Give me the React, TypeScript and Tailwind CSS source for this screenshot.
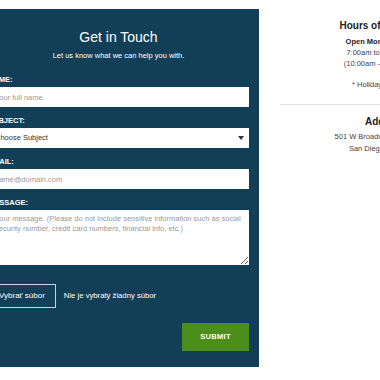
import React from 'react';

const font = { fontFamily: '"Liberation Sans", Arial, sans-serif' };

const Label: React.FC<{ text: string }> = ({ text }) => (
  <label className="block text-[7.5px] leading-[10px] font-bold text-white uppercase">{text}</label>
);

const ContactForm: React.FC = () => {
  return (
    <div className="w-[281px] shrink-0 mt-[9px] bg-[#123f58] px-[10px] pt-[20px] pb-[16px]">
      <h2 className="text-center text-white text-[14px] leading-[17px]">Get in Touch</h2>
      <p className="text-center text-white text-[7.5px] leading-[10px] mt-[5px]">
        Let us know what we can help you with.
      </p>

      {/* Name */}
      <div className="mt-[14px]">
        <Label text="Name:" />
        <input
          className="mt-[2px] block w-full h-[20px] bg-white px-[7px] text-[7.5px] text-[#333] placeholder:text-[#999] outline-none"
          placeholder="Your full name"
        />
      </div>

      {/* Subject */}
      <div className="mt-[9px]">
        <Label text="Subject:" />
        <div className="mt-[2px] h-[20px] bg-white flex items-center justify-between pl-[7px] pr-[5px]">
          <span className="text-[7.5px] text-[#333]">Choose Subject</span>
          <span className="w-0 h-0 border-l-[3px] border-r-[3px] border-t-[4px] border-l-transparent border-r-transparent border-t-[#333]" />
        </div>
      </div>

      {/* Email */}
      <div className="mt-[9px]">
        <Label text="Email:" />
        <input
          className="mt-[2px] block w-full h-[20px] bg-white px-[7px] text-[7.5px] text-[#333] placeholder:text-[#999] outline-none"
          placeholder="name@domain.com"
        />
      </div>

      {/* Message */}
      <div className="mt-[9px]">
        <Label text="Message:" />
        <textarea
          className="mt-[2px] block w-full h-[55px] bg-white px-[7px] py-[4px] text-[7.5px] leading-[10px] text-[#333] placeholder:text-[#999] outline-none"
          placeholder="Your message. (Please do not include sensitive information such as social security number, credit card numbers, financial info, etc.)"
        />
      </div>

      {/* File */}
      <div className="mt-[19px] flex items-center gap-[8px]">
        <button className="h-[24px] px-[10px] border border-[#c9d3da] text-white text-[8px]">Vybrať súbor</button>
        <span className="text-white text-[7.7px]">Nie je vybratý žiadny súbor</span>
      </div>

      <div className="mt-[15px] flex justify-end">
        <button className="w-[67px] h-[28px] bg-[#4b8e1c] text-white text-[7.5px] font-bold tracking-[0.3px]">SUBMIT</button>
      </div>
    </div>
  );
};

const InfoColumn: React.FC = () => (
  <div className="ml-[21px] w-[210px] shrink-0 text-center text-[#444]">
    <h3 className="mt-[20px] text-[10px] leading-[12px] font-bold text-[#222]">Hours of Operation</h3>
    <p className="mt-[4px] text-[7.5px] leading-[11px] font-bold text-[#222]">Open Monday - Friday</p>
    <p className="text-[7.5px] leading-[11px]">7:00am to 4:00pm PST</p>
    <p className="text-[7.5px] leading-[11px]">(10:00am - 7:00pm EST)</p>
    <p className="mt-[10px] text-[7.5px] leading-[11px]">* Holidays excluded</p>
    <div className="mt-[14px] border-t border-[#dedede]" />
    <h3 className="mt-[11px] text-[10px] leading-[12px] font-bold text-[#222]">Address</h3>
    <p className="mt-[3px] text-[7.5px] leading-[12px]">501 W Broadway, Suite #1800</p>
    <p className="text-[7.5px] leading-[12px]">San Diego, CA 92101</p>
  </div>
);

export default function App() {
  return (
    <div className="w-[380px] h-[380px] overflow-hidden bg-white" style={font}>
      <div className="flex -ml-[22px] w-[600px]">
        <ContactForm />
        <InfoColumn />
      </div>
    </div>
  );
}
